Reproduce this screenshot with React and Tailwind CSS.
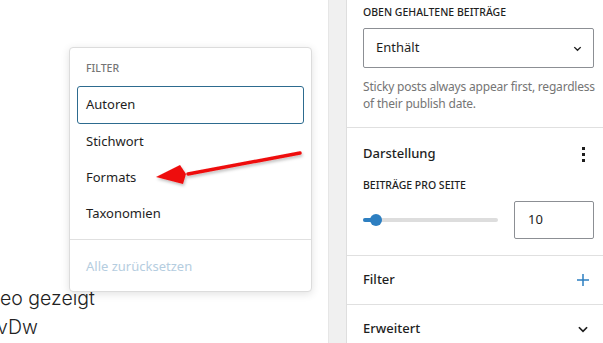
import React from 'react'

const ui = { fontFamily: '"Noto Sans", "Open Sans", Arial, sans-serif' }

function Chevron({ size = 10, className = '' }) {
  return (
    <svg width={size} height={size} viewBox="0 0 12 12" fill="none" className={className}>
      <path d="M2.5 4.5L6 8L9.5 4.5" stroke="#1e1e1e" strokeWidth="1.5" />
    </svg>
  )
}

function FilterPopover() {
  const items = ['Stichwort', 'Formats', 'Taxonomien']
  return (
    <div className="absolute left-[69px] top-[47px] z-10 w-[243px] h-[245px] bg-white border border-[#dcdcdc] rounded-[4px] shadow-[0_2px_8px_rgba(0,0,0,0.12)] flex flex-col" style={ui}>
      <div className="px-[7px] pt-3">
        <div className="px-[9px] h-4 text-[10.5px] leading-4 font-medium uppercase text-[#757575] mb-[10px]">Filter</div>
        <div className="h-[38px] border-[1.5px] border-[#2d6b8f] rounded-[3px] px-2 flex items-center text-[13px] text-[#1e1e1e]">Autoren</div>
        {items.map((t) => (
          <div key={t} className="h-9 px-[9px] flex items-center text-[13px] text-[#1e1e1e]">{t}</div>
        ))}
      </div>
      <div className="mt-[7px] border-t border-[#e0e0e0] flex-1 flex items-center pt-[3px] px-4 text-[13px] text-[#b5cde0]">
        Alle zurücksetzen
      </div>
    </div>
  )
}

function Arrow() {
  return (
    <svg className="absolute left-[150px] top-[145px] z-20" width="160" height="45" viewBox="0 0 160 45">
      <defs>
        <filter id="sh" x="-10%" y="-30%" width="120%" height="160%">
          <feDropShadow dx="1" dy="2" stdDeviation="1.5" floodColor="#000" floodOpacity="0.25" />
        </filter>
      </defs>
      <g filter="url(#sh)">
        <path d="M150 8 L38 29" stroke="#ee1111" strokeWidth="3.5" strokeLinecap="round" />
        <path d="M6 32 L30 20 L36 29 L33 39 Z" fill="#ee1111" />
      </g>
    </svg>
  )
}

function Row({ children, className = '' }) {
  return <div className={`border-t border-[#e0e0e0] ${className}`}>{children}</div>
}

export default function App() {
  const bg = { fontFamily: 'Inter, "Open Sans", sans-serif' }
  return (
    <div className="w-[603px] h-[343px] overflow-hidden bg-white flex relative">
      {/* canvas */}
      <div className="w-[328px] shrink-0 relative flex flex-col justify-end pb-[1px] overflow-hidden">
        <FilterPopover />
        <Arrow />
        <div className="text-[19.5px] font-light leading-[29px] text-[#222]" style={bg}>eo gezeigt</div>
        <div className="text-[19.5px] font-light leading-[29px] text-[#222] ml-[-3px]" style={bg}>vDw</div>
      </div>

      {/* scroll strip */}
      <div className="w-[18px] shrink-0 bg-[#f0f0f0] border-l border-[#e6e6e6]" />

      {/* sidebar */}
      <div className="flex-1 border-l border-[#dedede] text-[#1e1e1e]" style={ui}>
        <div className="pl-4 pr-[10px] pt-1 pb-[15px]">
          <div className="h-4 text-[10.5px] leading-4 font-medium uppercase mb-2">Oben gehaltene Beiträge</div>
          <div className="h-10 border border-[#8c8f94] rounded-[2px] flex items-center justify-between pl-3 pr-[10px] text-[13px]">
            <span>Enthält</span>
            <Chevron size={11} />
          </div>
          <p className="mt-[10px] mr-[-8px] text-[12px] tracking-[-0.2px] leading-[17px] text-[#757575]">
            Sticky posts always appear first, regardless of their publish date.
          </p>
        </div>

        <Row className="pl-4 pr-[10px] pt-4 pb-4">
          <div className="h-5 flex items-center justify-between text-[13px] font-medium">
            <span>Darstellung</span>
            <div className="w-6 flex flex-col items-center gap-[3px] mr-[-1px]">
              <span className="w-[3px] h-[3px] bg-[#1e1e1e]" />
              <span className="w-[3px] h-[3px] bg-[#1e1e1e]" />
              <span className="w-[3px] h-[3px] bg-[#1e1e1e]" />
            </div>
          </div>
          <div className="mt-[13px] h-4 text-[10.5px] leading-4 font-medium uppercase">Beiträge pro Seite</div>
          <div className="mt-2 flex items-center gap-4">
            <div className="w-[135px] h-1 rounded-full bg-[#dddddd] relative">
              <div className="absolute left-0 top-0 h-1 w-[13px] rounded-full bg-[#2d7fc1]" />
              <div className="absolute left-[7px] top-[-4px] w-3 h-3 rounded-full bg-[#2d7fc1]" />
            </div>
            <div className="w-[80px] h-[38px] border border-[#8c8f94] rounded-[2px] flex items-center px-[13px] text-[13px]">10</div>
          </div>
        </Row>

        <Row className="pl-4 pr-[10px] h-[49px] flex items-center justify-between">
          <span className="text-[13px] font-medium">Filter</span>
          <svg width="24" height="24" viewBox="0 0 24 24" className="mr-[-1px]">
            <path d="M12 6v12M6 12h12" stroke="#2d7fc1" strokeWidth="1.5" />
          </svg>
        </Row>

        <Row className="pl-4 pr-[10px] h-[49px] flex items-center justify-between">
          <span className="text-[13px] font-medium">Erweitert</span>
          <div className="w-6 flex justify-center mr-[-1px]">
            <Chevron size={14} />
          </div>
        </Row>
      </div>
    </div>
  )
}
